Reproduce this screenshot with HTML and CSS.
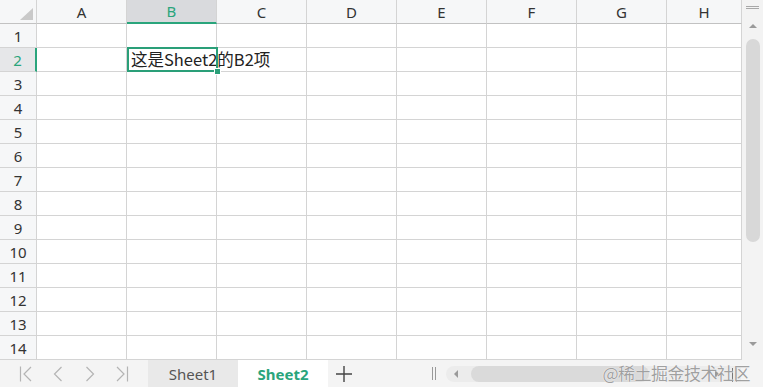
FILE: index.html
```html
<!DOCTYPE html>
<html>
<head>
    <title>Sheet2</title>
    <link rel="stylesheet" href="styles.css">
</head>
<body>
<div class="app">
    <div class="main">
        <div class="grid">
            <div class="hd corner"><span class="tri"></span></div>
            <div class="hd">A</div><div class="hd on">B</div><div class="hd">C</div><div class="hd">D</div>
            <div class="hd">E</div><div class="hd">F</div><div class="hd">G</div><div class="hd">H</div>

            <div class="rh">1</div><div></div><div></div><div></div><div></div><div></div><div></div><div></div><div></div>
            <div class="rh on">2</div><div></div>
            <div class="cell-b2"><span class="val">这是Sheet2的B2项</span><span class="sel"><i class="handle"></i></span></div>
            <div></div><div></div><div></div><div></div><div></div><div></div>
            <div class="rh">3</div><div></div><div></div><div></div><div></div><div></div><div></div><div></div><div></div>
            <div class="rh">4</div><div></div><div></div><div></div><div></div><div></div><div></div><div></div><div></div>
            <div class="rh">5</div><div></div><div></div><div></div><div></div><div></div><div></div><div></div><div></div>
            <div class="rh">6</div><div></div><div></div><div></div><div></div><div></div><div></div><div></div><div></div>
            <div class="rh">7</div><div></div><div></div><div></div><div></div><div></div><div></div><div></div><div></div>
            <div class="rh">8</div><div></div><div></div><div></div><div></div><div></div><div></div><div></div><div></div>
            <div class="rh">9</div><div></div><div></div><div></div><div></div><div></div><div></div><div></div><div></div>
            <div class="rh">10</div><div></div><div></div><div></div><div></div><div></div><div></div><div></div><div></div>
            <div class="rh">11</div><div></div><div></div><div></div><div></div><div></div><div></div><div></div><div></div>
            <div class="rh">12</div><div></div><div></div><div></div><div></div><div></div><div></div><div></div><div></div>
            <div class="rh">13</div><div></div><div></div><div></div><div></div><div></div><div></div><div></div><div></div>
            <div class="rh">14</div><div></div><div></div><div></div><div></div><div></div><div></div><div></div><div></div>
        </div>
        <div class="vscroll">
            <div class="grip"></div>
            <div class="arrow-up"></div>
            <div class="vthumb"></div>
            <div class="vspace"></div>
            <div class="arrow-down"></div>
        </div>
    </div>
    <div class="tabbar">
        <div class="nav">
            <span class="navbtn"><svg width="14" height="16" viewBox="0 0 14 16"><path d="M1.5 0.5V15.5M12 1L5 8L12 15" /></svg></span>
            <span class="navbtn"><svg width="10" height="16" viewBox="0 0 10 16"><path d="M8.5 1L1.5 8L8.5 15" /></svg></span>
            <span class="navbtn"><svg width="10" height="16" viewBox="0 0 10 16"><path d="M1.5 1L8.5 8L1.5 15" /></svg></span>
            <span class="navbtn"><svg width="14" height="16" viewBox="0 0 14 16"><path d="M2 1L9 8L2 15M12.5 0.5V15.5" /></svg></span>
        </div>
        <div class="tab">Sheet1</div>
        <div class="tab active">Sheet2</div>
        <div class="add"><svg width="18" height="18" viewBox="0 0 18 18"><path d="M9 1V17M1 9H17" /></svg></div>
        <div class="split"></div>
        <div class="hscroll">
            <span class="arrow-left"></span>
            <span class="hthumb"></span>
            <span class="arrow-right"></span>
        </div>
        <span class="corner-grip"></span>
        <div class="mark">@稀土掘金技术社区</div>
    </div>
</div>
</body>
</html>
```

FILE: styles.css
```css
body { margin: 0; background: #fff; font-family: "Noto Sans", "Noto Sans CJK SC", sans-serif; color: #333; }
.app { width: 763px; height: 387px; display: flex; flex-direction: column; overflow: hidden; position: relative; }
.main { display: flex; height: 360px; }

.grid { display: grid; grid-template-columns: 37px repeat(7, 90px) 75px; grid-auto-rows: 24px; width: 742px; }
.grid > div { box-sizing: border-box; border-right: 1px solid #d4d4d4; border-bottom: 1px solid #d4d4d4; }

.hd { background: #f6f7f8; border-bottom-color: #c2c2c2 !important; font-size: 15px; display: flex; align-items: center; justify-content: center; }
.hd.on { background: #d9dadd; color: #2aa57c; border-bottom: 2px solid #2aa57c !important; }
.corner { position: relative; }
.tri { position: absolute; right: 3px; bottom: 3px; width: 0; height: 0; border-left: 13px solid transparent; border-bottom: 12px solid #c9c9c9; }

.rh { background: #f6f7f8; font-size: 15px; display: flex; align-items: center; justify-content: center; }
.rh.on { background: #e6e7e9; color: #2aa57c; border-right: 2px solid #2aa57c !important; }

.cell-b2 { position: relative; }
.val { position: absolute; left: 4px; bottom: 1px; white-space: nowrap; font-family: "Noto Sans CJK SC", sans-serif; font-size: 16.5px; line-height: 22px; color: #222; z-index: 1; }
.sel { position: absolute; left: 0; top: -1px; right: -2px; bottom: -1px; border: 2px solid #2a9f78; z-index: 2; }
.handle { position: absolute; right: -5px; bottom: -5px; width: 5px; height: 5px; background: #2a9f78; border: 1px solid #fff; }

.vscroll { width: 21px; background: #f3f3f3; display: flex; flex-direction: column; align-items: center; }
.grip { width: 13px; height: 3px; margin-top: 6px; border-top: 1px solid #a8a8a8; border-bottom: 1px solid #a8a8a8; box-sizing: border-box; }
.arrow-up { margin-top: 15px; width: 0; height: 0; border-left: 4px solid transparent; border-right: 4px solid transparent; border-bottom: 4px solid #9a9a9a; }
.vthumb { margin-top: 11px; width: 14px; height: 203px; background: #d8d8d8; border-radius: 7px; }
.vspace { flex: 1; }
.arrow-down { margin-bottom: 14px; width: 0; height: 0; border-left: 4px solid transparent; border-right: 4px solid transparent; border-top: 4px solid #9a9a9a; }

.tabbar { height: 27px; background: #f4f4f4; display: flex; align-items: stretch; position: relative; }
.nav { display: flex; padding-left: 10px; width: 138px; }
.navbtn { width: 32px; display: flex; align-items: center; justify-content: center; }
.navbtn svg path { fill: none; stroke: #b4b4b4; stroke-width: 1.2; }
.tab { width: 90px; display: flex; align-items: center; justify-content: center; font-size: 15px; color: #555; background: #e9e9e9; }
.tab.active { background: #fff; color: #2aa57c; font-weight: bold; }
.add { width: 32px; display: flex; align-items: center; justify-content: center; }
.add svg path { stroke: #444; stroke-width: 1.4; }
.split { width: 4px; margin-left: 72px; margin-right: 10px; align-self: center; height: 13px; border-left: 1px solid #999; border-right: 1px solid #999; box-sizing: border-box; }
.hscroll { width: 295px; align-self: center; height: 16px; background: #ececec; border-radius: 8px 0 0 8px; display: flex; align-items: center; }
.arrow-left { margin-left: 8px; width: 0; height: 0; border-top: 4px solid transparent; border-bottom: 4px solid transparent; border-right: 4px solid #9a9a9a; }
.hthumb { margin-left: 13px; width: 178px; height: 16px; background: #dadada; border-radius: 8px; }
.arrow-right { margin-left: 66px; width: 0; height: 0; border-top: 4px solid transparent; border-bottom: 4px solid transparent; border-left: 4px solid #9a9a9a; }
.corner-grip { position: absolute; right: 26px; top: 8px; width: 3px; height: 14px; border-left: 1px solid #777; border-right: 1px solid #777; }

.mark { position: absolute; right: 13px; top: 1px; font-family: "Noto Sans CJK SC", sans-serif; font-size: 17px; line-height: 24px; color: #a0a0a0; text-shadow: 0 0 1px #fff, 0 0 1px #fff; letter-spacing: -0.5px; }
```
